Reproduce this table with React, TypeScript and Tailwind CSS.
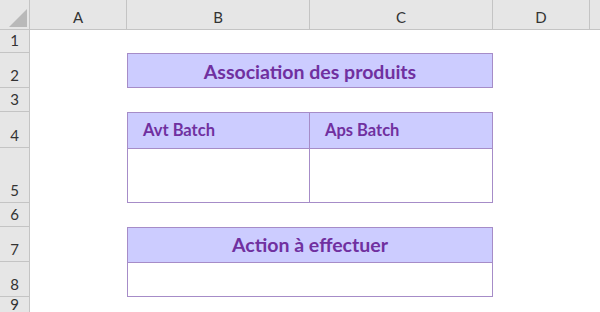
const columns = ["A", "B", "C", "D"];
const rows = [1, 2, 3, 4, 5, 6, 7, 8, 9];

const cellFont = { fontFamily: "Lato, 'Open Sans', sans-serif" };

export default function App() {
  return (
    <div
      className="grid h-[312px] w-[600px] overflow-hidden bg-white grid-cols-[30px_97px_183px_183px_97px_1fr] grid-rows-[30px_23px_35px_24px_36px_55px_24px_35px_35px_1fr] text-[#333]"
      style={cellFont}
    >
      {/* corner with the select-all triangle */}
      <div className="relative border-r border-b border-[#c4c4c4] bg-[#e6e6e6]">
        <svg className="absolute left-[9px] top-[9px]" width="18" height="18" viewBox="0 0 18 18">
          <polygon points="18,0 18,18 0,18" fill="#b9b9b9" />
        </svg>
      </div>

      {/* column headers */}
      {columns.map((c) => (
        <div
          key={c}
          className="flex items-end justify-center border-r border-b border-[#c4c4c4] bg-[#e6e6e6] pb-[4px] text-[15px] leading-none"
        >
          {c}
        </div>
      ))}
      <div className="border-b border-[#c4c4c4] bg-[#e6e6e6]" />

      {/* row headers */}
      {rows.map((r, i) => (
        <div
          key={r}
          style={{ gridRowStart: i + 2 }}
          className="col-start-1 flex items-end justify-center border-r border-b border-[#c4c4c4] bg-[#e6e6e6] pb-[4px] text-[15px] leading-none"
        >
          {r}
        </div>
      ))}

      {/* B2:C2 title */}
      <div className="col-start-3 col-span-2 row-start-3 flex items-center justify-center border border-[#a68cc8] bg-[#ccccff] pt-[2px] text-[19.5px] font-bold text-[#7030a0]">
        Association des produits
      </div>

      {/* B4:C5 two-column table */}
      <div className="col-start-3 col-span-2 row-start-5 row-span-2 grid grid-cols-2 grid-rows-[36px_1fr] border border-[#a68cc8]">
        <div className="flex items-center border-r border-b border-[#a68cc8] bg-[#ccccff] pl-[15px] text-[16.5px] font-bold text-[#7030a0]">
          Avt Batch
        </div>
        <div className="flex items-center border-b border-[#a68cc8] bg-[#ccccff] pl-[15px] text-[16.5px] font-bold text-[#7030a0]">
          Aps Batch
        </div>
        <div className="border-r border-[#a68cc8]" />
        <div />
      </div>

      {/* B7:C8 action block */}
      <div className="col-start-3 col-span-2 row-start-8 row-span-2 grid grid-rows-[35px_1fr] border border-[#a68cc8]">
        <div className="flex items-center justify-center border-b border-[#a68cc8] bg-[#ccccff] text-[19.5px] font-bold text-[#7030a0]">
          Action à effectuer
        </div>
        <div />
      </div>
    </div>
  );
}
